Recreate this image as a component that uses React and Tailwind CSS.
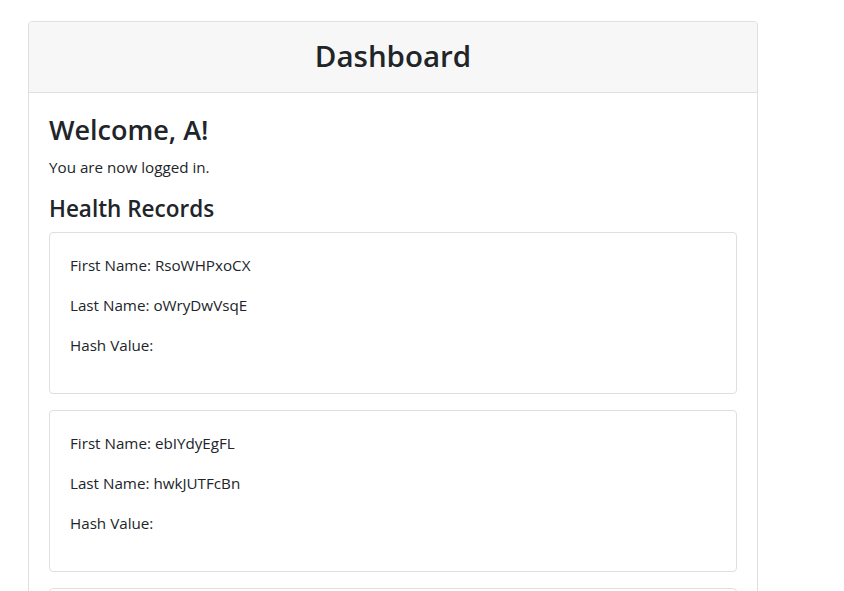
const records = [
  { first: "RsoWHPxoCX", last: "oWryDwVsqE", hash: "" },
  { first: "ebIYdyEgFL", last: "hwkJUTFcBn", hash: "" },
  { first: "qLmTzRvKpA", last: "nXcBvHtYuW", hash: "" },
];

function RecordCard({ record }) {
  return (
    <div className="mb-4 rounded border border-[#dfdfdf] bg-white p-5">
      <p className="mb-4 leading-6">First Name: {record.first}</p>
      <p className="mb-4 leading-6">Last Name: {record.last}</p>
      <p className="mb-4 leading-6">Hash Value: {record.hash}</p>
    </div>
  );
}

export default function App() {
  return (
    <div className="min-h-screen bg-white pt-[21px] pl-[28px] font-['Open_Sans',sans-serif] text-[15.2px] text-[#212529]">
      <div className="w-[730px] rounded border border-[#dfdfdf]">
        <div className="rounded-t border-b border-[#dfdfdf] bg-[#f7f7f7] px-5 pt-[15px] pb-[17px] text-center">
          <h1 className="text-[29.5px] leading-[38.4px] font-semibold">Dashboard</h1>
        </div>
        <div className="p-5">
          <h2 className="mb-2 text-[27px] leading-[33.6px] font-semibold">Welcome, A!</h2>
          <p className="mb-4 leading-6">You are now logged in.</p>
          <h3 className="mb-2 text-[22.5px] leading-[28.8px] font-semibold">Health Records</h3>
          {records.map((r) => (
            <RecordCard key={r.first} record={r} />
          ))}
        </div>
      </div>
    </div>
  );
}
